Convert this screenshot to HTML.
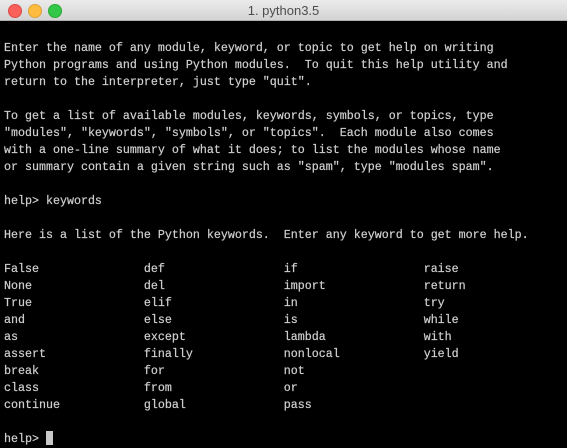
<!DOCTYPE html>
<html><head><style>
html,body{margin:0;padding:0;background:#000;width:567px;height:444px;overflow:hidden}
.tb{position:absolute;left:0;top:0;width:567px;height:21px;background:linear-gradient(#ebebeb,#d3d3d3);border-bottom:1px solid #b0b0b0;box-sizing:border-box}
.dot{position:absolute;top:4px;width:12px;height:12px;border-radius:50%}
.t{position:absolute;left:0;width:567px;top:3px;text-align:center;font:13px "Liberation Sans",sans-serif;color:#4d4d4d}
pre{position:absolute;left:4px;top:40px;margin:0;font:11.67px/17px "Liberation Mono",monospace;color:#d0d0d0;-webkit-text-stroke:0.2px #d0d0d0}
.cur{display:inline-block;width:7px;height:14px;background:#c8c8c8;vertical-align:-3px}
</style></head><body>
<div class="tb">
<div class="dot" style="left:8px;background:#fc605b;border:.5px solid #de4a44"></div>
<div class="dot" style="left:28px;background:#fdbc40;border:.5px solid #dea236"></div>
<div class="dot" style="left:48px;background:#34c84a;border:.5px solid #27aa35"></div>
<div class="t">1. python3.5</div>
</div>
<pre>Enter the name of any module, keyword, or topic to get help on writing
Python programs and using Python modules.  To quit this help utility and
return to the interpreter, just type "quit".

To get a list of available modules, keywords, symbols, or topics, type
"modules", "keywords", "symbols", or "topics".  Each module also comes
with a one-line summary of what it does; to list the modules whose name
or summary contain a given string such as "spam", type "modules spam".

help&gt; keywords

Here is a list of the Python keywords.  Enter any keyword to get more help.

False               def                 if                  raise
None                del                 import              return
True                elif                in                  try
and                 else                is                  while
as                  except              lambda              with
assert              finally             nonlocal            yield
break               for                 not                 
class               from                or                  
continue            global              pass                

help&gt; <span class="cur"></span></pre>
</body></html>
